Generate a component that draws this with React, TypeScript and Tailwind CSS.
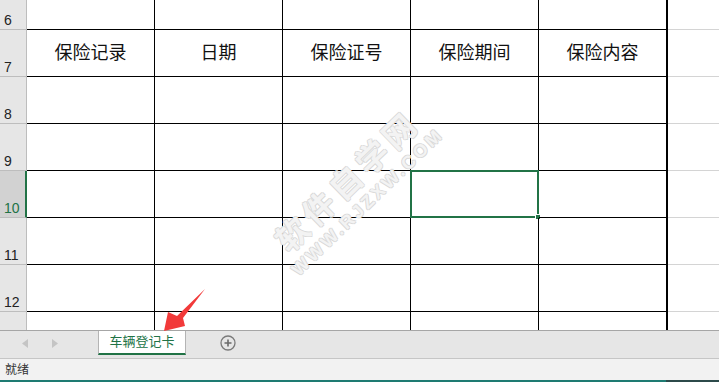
import { memo } from 'react'

const COLS = ['保险记录', '日期', '保险证号', '保险期间', '保险内容']

const ROWS = [
  { n: 6, h: 'h-[30px]' },
  { n: 7, h: 'h-[47px]', header: true },
  { n: 8, h: 'h-[47px]' },
  { n: 9, h: 'h-[47px]' },
  { n: 10, h: 'h-[47px]', active: true },
  { n: 11, h: 'h-[47px]' },
  { n: 12, h: 'h-[47px]' },
  { n: 13, h: 'h-[47px]' },
]

const FONT = "font-['Liberation_Sans','Noto_Sans_CJK_SC',sans-serif]"

const SheetRow = ({ n, h, header, active }: { n: number; h: string; header?: boolean; active?: boolean }) => (
  <div className={`flex ${h} shrink-0`}>
    <div
      className={`flex w-[27px] shrink-0 items-end border-b border-b-[#bdbdbd] pb-[2px] pl-[4px] text-[14px] leading-none ${
        active
          ? 'border-r-2 border-r-[#217346] bg-[#d2d2d2] text-[#217346]'
          : 'border-r border-r-[#bdbdbd] bg-[#e6e6e6] text-[#222]'
      }`}
    >
      {n}
    </div>
    {COLS.map((c, i) => (
      <div
        key={c}
        className={`relative flex shrink-0 items-center justify-center border-b border-black text-[18px] text-[#111] ${
          i === 4 ? 'w-[129px] border-r-2' : 'w-[128px] border-r'
        } border-r-black`}
      >
        {header ? c : null}
        {active && i === 3 && (
          <div className="absolute -left-[1px] -top-[1px] h-[48px] w-[129px] border-2 border-[#217346]">
            <div className="absolute -bottom-[4px] -right-[4px] h-[6px] w-[6px] border border-white bg-[#217346]" />
          </div>
        )}
      </div>
    ))}
    <div className="flex-1 border-b border-[#d4d4d4]" />
  </div>
)

// faint embossed watermark lying over the grid
const Watermark = () => (
  <div className="pointer-events-none absolute left-[355px] top-[189px] flex -translate-x-1/2 -translate-y-1/2 -rotate-[44deg] flex-col items-center text-[#f3f3f3] [text-shadow:1px_0_0_#d9d9d9,-1px_0_0_#d9d9d9,0_1px_0_#d9d9d9,0_-1px_0_#d9d9d9]">
    <span className="whitespace-nowrap text-[32px] font-bold leading-[36px] tracking-[5px]">软件自学网</span>
    <span className="whitespace-nowrap font-['Liberation_Sans',sans-serif] text-[18px] font-bold leading-[20px] tracking-[3px]">
      WWW.RJZXW.COM
    </span>
  </div>
)

const Arrow = () => (
  <svg className="pointer-events-none absolute left-0 top-0" width="719" height="382">
    <polygon points="205,289 183,318 185,326 164,331 168,312 177,316" fill="#f23a3a" />
  </svg>
)

const App = memo(() => {
  return (
    <div className={`relative flex h-[382px] w-[719px] flex-col overflow-hidden bg-white ${FONT}`}>
      <div className="flex h-[330px] shrink-0 flex-col overflow-hidden">
        {ROWS.map((r) => (
          <SheetRow key={r.n} {...r} />
        ))}
      </div>

      <div className="flex h-[29px] shrink-0 items-start border-y border-t-[#a6a6a6] border-b-[#c6c6c6] bg-[#e6e6e6]">
        <div className="flex h-[24px] w-[98px] items-center gap-[24px] pl-[22px]">
          <svg width="6" height="9" viewBox="0 0 6 9">
            <polygon points="6,0 0,4.5 6,9" fill="#c4c4c4" />
          </svg>
          <svg width="6" height="9" viewBox="0 0 6 9">
            <polygon points="0,0 6,4.5 0,9" fill="#c4c4c4" />
          </svg>
        </div>
        <div className="flex h-[24px] w-[88px] items-center justify-center border-x border-b-2 border-x-[#b4b4b4] border-b-[#217346] bg-white text-[13px] text-[#217346]">
          车辆登记卡
        </div>
        <div className="flex h-[24px] items-center pl-[34px]">
          <svg width="16" height="16" viewBox="0 0 16 16">
            <circle cx="8" cy="8" r="7" fill="none" stroke="#7a7a7a" strokeWidth="1.3" />
            <path d="M8 4.5v7M4.5 8h7" stroke="#6a6a6a" strokeWidth="1.6" />
          </svg>
        </div>
      </div>

      <div className="flex h-[21px] shrink-0 items-center bg-[#f2f2f2] pl-[5px] text-[12px] text-[#333]">就绪</div>

      <div className="flex h-[2px] shrink-0">
        <div className="w-[666px] bg-[#1e7b72]" />
        <div className="flex-1 bg-[#2c4a4a]" />
      </div>

      <Watermark />
      <Arrow />
    </div>
  )
})

App.displayName = 'App'

export default App
